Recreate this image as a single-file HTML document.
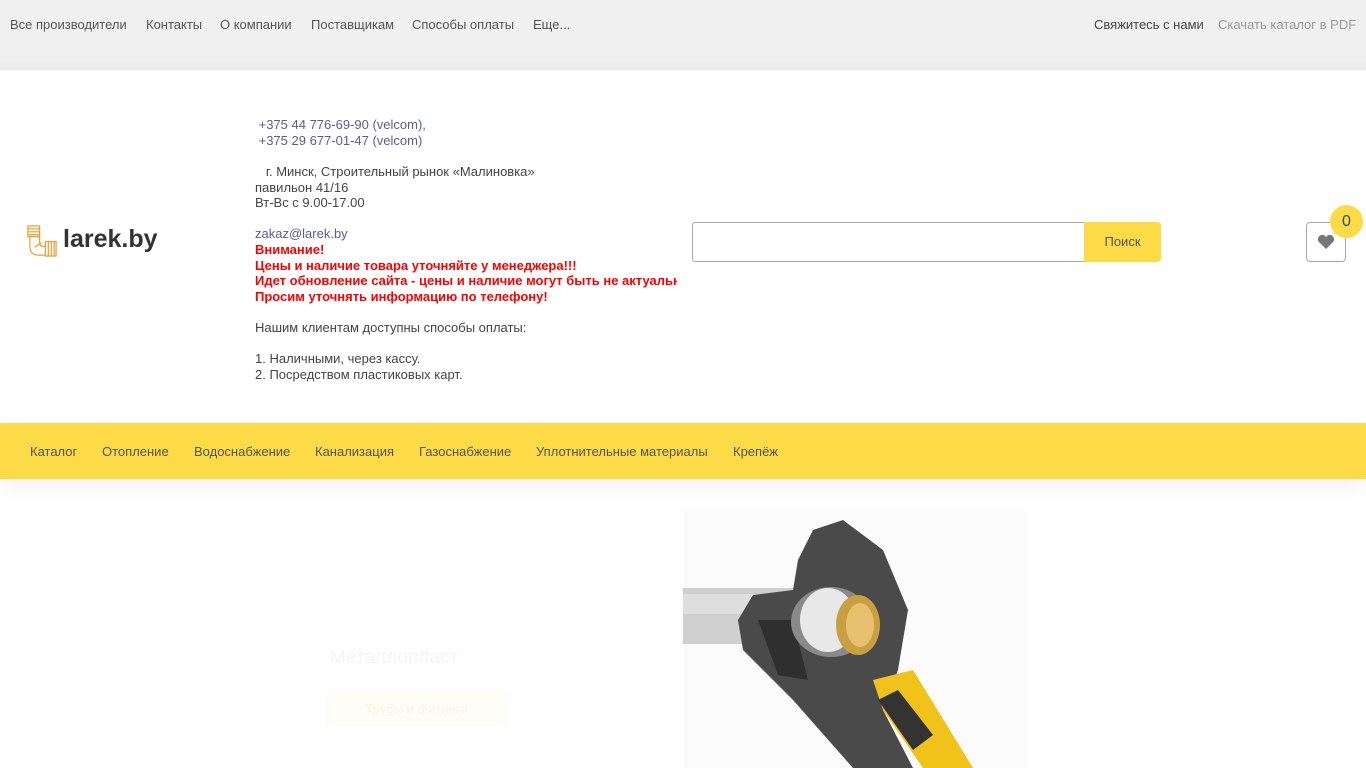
<!DOCTYPE html>
<html><head><meta charset="utf-8"><style>
*{margin:0;padding:0;box-sizing:border-box}
body{width:1366px;height:768px;overflow:hidden;background:#fff;font-family:"Liberation Sans",sans-serif;font-size:13px;color:#444;position:relative}
.top{position:absolute;left:0;top:0;width:1366px;height:70px;background:linear-gradient(#f0f0f0 0,#f0f0f0 60px,#e9e9e9 70px)}
.top span{position:absolute;top:17px;font-size:13px;color:#555}
.a{position:absolute;font-size:13px;line-height:15.5px}
.blue{color:#5b5b9a}
.red{color:#f00;font-weight:bold}
.nav{position:absolute;left:0;top:423px;width:1366px;height:56px;background:#fddb46;box-shadow:0 8px 20px rgba(0,0,0,.06)}
.nav span{position:absolute;top:21px;color:#555;font-size:13px}
</style></head><body>
<div class="top">
<span style="left:10px">Все производители</span>
<span style="left:146px">Контакты</span>
<span style="left:220px">О компании</span>
<span style="left:311px">Поставщикам</span>
<span style="left:412px">Способы оплаты</span>
<span style="left:533px">Еще...</span>
<span style="left:1094px;color:#444">Свяжитесь с нами</span>
<span style="left:1218px;color:#999">Скачать каталог в PDF</span>
</div>
<svg style="position:absolute;left:26px;top:225px" width="33" height="33" viewBox="0 0 34 34" fill="none" stroke="#e8a23a" stroke-width="1.3">
<rect x="2" y="1" width="12" height="11"/><line x1="2" y1="4" x2="14" y2="4"/><line x1="2" y1="7" x2="14" y2="7"/><line x1="2" y1="10" x2="14" y2="10"/>
<path d="M4 12 V22 Q4 31 13 31 H20"/><path d="M14 12 V18 Q14 22 18 22 H20"/>
<rect x="20" y="17" width="11" height="15"/><line x1="23" y1="17" x2="23" y2="32"/><line x1="26" y1="17" x2="26" y2="32"/><line x1="29" y1="17" x2="29" y2="32"/>
<line x1="9" y1="23" x2="16" y2="18"/></svg>
<div style="position:absolute;left:63px;top:225px;font-size:25px;font-weight:bold;color:#333;letter-spacing:0">larek.by</div>
<div class="a blue" style="left:255px;top:117px">&nbsp;+375 44 776-69-90 (velcom),<br>&nbsp;+375 29 677-01-47 (velcom)</div>
<div class="a" style="left:255px;top:164px">&nbsp;&nbsp;&nbsp;г. Минск, Строительный рынок «Малиновка»<br>павильон 41/16<br>Вт-Вс с 9.00-17.00</div>
<div class="a blue" style="left:255px;top:226px">zakaz@larek.by</div>
<div class="a red" style="left:255px;top:242px;width:422px;overflow:hidden;white-space:nowrap">Внимание!<br>Цены и наличие товара уточняйте у менеджера!!!<br>Идет обновление сайта - цены и наличие могут быть не актуальны<br>Просим уточнять информацию по телефону!</div>
<div class="a" style="left:255px;top:320px">Нашим клиентам доступны способы оплаты:</div>
<div class="a" style="left:255px;top:351px">1. Наличными, через кассу.<br>2. Посредством пластиковых карт.</div>
<div style="position:absolute;left:692px;top:222px;width:393px;height:40px;border:1px solid #aaa;border-radius:3px 0 0 3px"></div>
<div style="position:absolute;left:1084px;top:222px;width:77px;height:40px;background:#fddb46;border-radius:0 4px 4px 0;color:#555;text-align:center;line-height:40px">Поиск</div>
<div style="position:absolute;left:1306px;top:222px;width:40px;height:40px;border:1px solid #aaa;border-radius:4px"></div>
<svg style="position:absolute;left:1317px;top:234px" width="18" height="16" viewBox="0 0 18 16"><path d="M9 15 L1.5 7.5 A4 4 0 0 1 9 3 A4 4 0 0 1 16.5 7.5 Z" fill="#777"/></svg>
<div style="position:absolute;left:1330px;top:205px;width:33px;height:33px;border-radius:50%;background:#fddb46;color:#444;font-size:16px;text-align:center;line-height:33px">0</div>
<div class="nav">
<span style="left:30px">Каталог</span><span style="left:102px">Отопление</span><span style="left:194px">Водоснабжение</span><span style="left:315px">Канализация</span><span style="left:419px">Газоснабжение</span><span style="left:536px">Уплотнительные материалы</span><span style="left:733px">Крепёж</span>
</div>
<div style="position:absolute;left:330px;top:647px;font-size:19px;color:#f4f4f4">Металлопласт</div>
<div style="position:absolute;left:325px;top:691px;width:183px;height:36px;background:#fffdf5;color:#f7f3e6;text-align:center;line-height:36px">Трубы и фитинги</div>
<svg style="position:absolute;left:683px;top:510px" width="344" height="258" viewBox="0 0 344 258">
<rect width="344" height="258" fill="#fbfbfb"/>
<rect x="0" y="78" width="120" height="56" fill="#cfcfcf"/><rect x="0" y="84" width="120" height="20" fill="#dedede"/>
<path d="M130 20 L160 10 L200 40 L225 100 L215 160 L200 200 L230 258 L170 258 L110 190 L90 170 L60 140 L55 110 L70 85 L110 80 L115 50 Z" fill="#4a4a4a"/>
<path d="M75 110 L110 110 L125 170 L95 165 Z" fill="#2f2f2f"/>
<ellipse cx="148" cy="112" rx="40" ry="35" fill="#8a8a8a"/>
<ellipse cx="145" cy="110" rx="28" ry="32" fill="#e8e8e8"/>
<ellipse cx="175" cy="115" rx="22" ry="30" fill="#c8a040"/>
<ellipse cx="177" cy="115" rx="14" ry="22" fill="#e8c070"/>
<path d="M190 170 L230 160 L290 258 L240 258 L200 200 Z" fill="#f1c21a"/>
<path d="M195 190 L215 180 L250 225 L230 240 Z" fill="#333"/>
</svg>
</body></html>
